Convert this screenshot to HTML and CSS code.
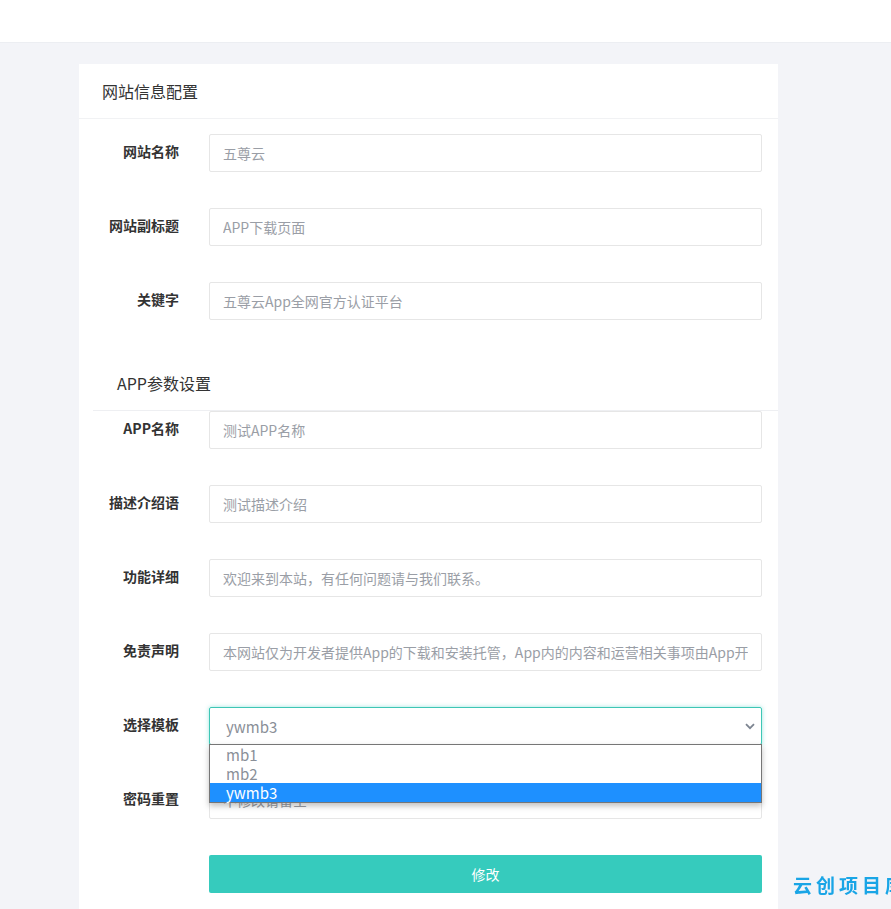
FILE: index.html
```html
<!DOCTYPE html>
<html lang="zh-CN">
<head>
  <meta charset="UTF-8">
  <meta name="viewport" content="width=device-width, initial-scale=1.0">
  <title>网站设置</title>
  <link rel="stylesheet" href="styles.css">
</head>
<body>
<div class="topbar"></div>

<div class="card">
  <div class="card-header">网站信息配置</div>
  <form class="card-body">
    <div class="form-row">
      <label class="form-label">网站名称</label>
      <input class="form-input" type="text" placeholder="五尊云">
    </div>
    <div class="form-row">
      <label class="form-label">网站副标题</label>
      <input class="form-input" type="text" placeholder="APP下载页面">
    </div>
    <div class="form-row">
      <label class="form-label">关键字</label>
      <input class="form-input" type="text" placeholder="五尊云App全网官方认证平台">
    </div>

    <div class="section-title">APP参数设置</div>

    <div class="form-row">
      <label class="form-label">APP名称</label>
      <input class="form-input" type="text" placeholder="测试APP名称">
    </div>
    <div class="form-row">
      <label class="form-label">描述介绍语</label>
      <input class="form-input" type="text" placeholder="测试描述介绍">
    </div>
    <div class="form-row">
      <label class="form-label">功能详细</label>
      <input class="form-input" type="text" placeholder="欢迎来到本站，有任何问题请与我们联系。">
    </div>
    <div class="form-row">
      <label class="form-label">免责声明</label>
      <input class="form-input" type="text" placeholder="本网站仅为开发者提供App的下载和安装托管，App内的内容和运营相关事项由App开发者负责">
    </div>
    <div class="form-row">
      <label class="form-label">选择模板</label>
      <div class="select-wrap">
        <div class="select-box">
          <span>ywmb3</span>
          <svg class="chevron" width="10" height="7" viewBox="0 0 10 7"><path d="M1 1.2 L5 5.2 L9 1.2" fill="none" stroke="#7d8591" stroke-width="1.8"/></svg>
        </div>
        <ul class="select-list">
          <li>mb1</li>
          <li>mb2</li>
          <li class="active">ywmb3</li>
        </ul>
      </div>
    </div>
    <div class="form-row">
      <label class="form-label">密码重置</label>
      <input class="form-input" type="text" placeholder="不修改请留空">
    </div>
    <div class="form-row">
      <span class="form-label"></span>
      <button type="button" class="btn-submit">修改</button>
    </div>
  </form>
</div>

<div class="watermark">云创项目库</div>
</body>
</html>
```

FILE: styles.css
```css
body {
  margin: 0;
  padding: 0;
  background-color: #f3f4f8;
  font-family: "Noto Sans CJK SC", "Noto Sans", sans-serif;
  color: #333;
}
.topbar {
  height: 42px;
  background-color: #fff;
  border-bottom: 1px solid #eceef2;
}
.card {
  width: 699px;
  margin: 21px 0 0 79px;
  background-color: #fff;
  height: 845px;
  overflow: hidden;
}
.card-header {
  height: 54px;
  line-height: 54px;
  padding-left: 23px;
  font-size: 16px;
  color: #333;
  border-bottom: 1px solid #f1f2f4;
}
.card-body {
  padding: 15px 16px 0 0;
  margin: 0;
}
.form-row {
  display: flex;
  align-items: flex-start;
  gap: 30px;
  margin-bottom: 36px;
}
.form-label {
  width: 100px;
  flex-shrink: 0;
  text-align: right;
  font-size: 14px;
  font-weight: bold;
  color: #333;
  padding-top: 7px;
  line-height: 20px;
}
.form-input {
  flex: 1;
  height: 38px;
  box-sizing: border-box;
  border: 1px solid #e6e6e6;
  border-radius: 2px;
  padding: 0 13px;
  font-family: inherit;
  font-size: 14px;
  color: #333;
  outline: none;
  min-width: 0;
}
.form-input::placeholder {
  color: #9a9ea6;
}
.section-title {
  margin-left: 14px;
  height: 54px;
  line-height: 54px;
  padding-left: 24px;
  font-size: 16px;
  color: #333;
  border-bottom: 1px solid #eeeff2;
  margin-right: -16px;
  margin-bottom: 0;
}
.select-wrap {
  flex: 1;
  position: relative;
}
.select-box {
  height: 38px;
  box-sizing: border-box;
  border: 1px solid #3ec6b5;
  border-radius: 2px;
  box-shadow: 0 0 4px rgba(54, 203, 189, 0.5);
  display: flex;
  align-items: center;
  justify-content: space-between;
  padding: 0 6px 0 16px;
  font-size: 15px;
  color: #8a8f98;
}
.select-list {
  position: absolute;
  top: 37px;
  left: 0;
  right: 0;
  margin: 0;
  padding: 0;
  list-style: none;
  background-color: #fff;
  border: 1px solid #767676;
  box-shadow: 0 3px 6px rgba(0, 0, 0, 0.25);
  z-index: 10;
}
.select-list li {
  height: 19px;
  line-height: 19px;
  padding-left: 16px;
  font-size: 15px;
  color: #8a8f98;
}
.select-list li.active {
  background-color: #1e90ff;
  color: #fff;
}
.btn-submit {
  flex: 1;
  height: 38px;
  border: none;
  border-radius: 2px;
  background-color: #36cbbd;
  color: #fff;
  font-family: inherit;
  font-size: 14px;
  cursor: pointer;
}
.watermark {
  position: fixed;
  left: 793px;
  top: 871px;
  font-size: 19px;
  font-weight: bold;
  letter-spacing: 4px;
  color: #19a5e6;
  white-space: nowrap;
}
```
